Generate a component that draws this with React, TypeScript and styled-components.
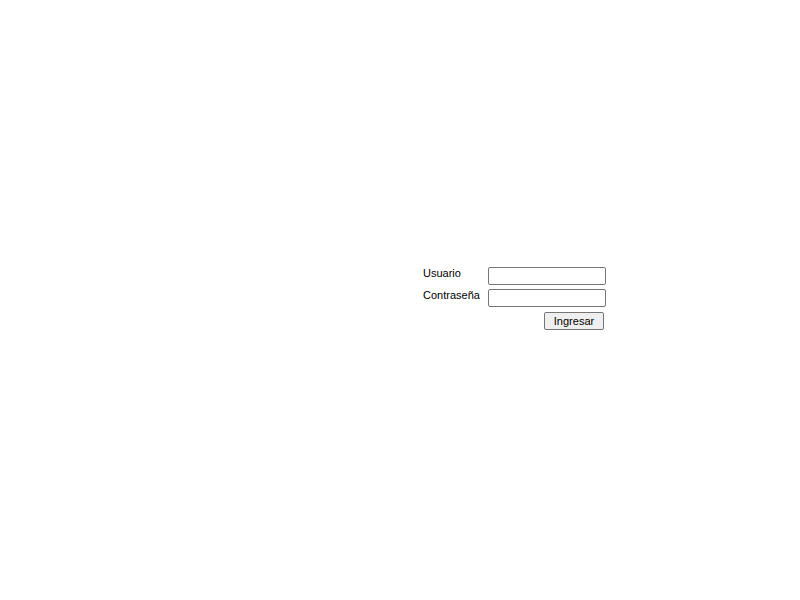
import React, { useState } from 'react';
import styled, { createGlobalStyle } from 'styled-components';

const GlobalStyle = createGlobalStyle`
  body {
    margin: 0;
    background: #fff;
    color: #000;
    font-family: "Liberation Sans", Arial, sans-serif;
    font-size: 11px;
  }
`;

const Page = styled.main`
  box-sizing: border-box;
  display: grid;
  grid-template-columns: 1fr 1fr;
  align-items: center;
  min-height: 100vh;
  padding-bottom: 4px;
`;

const LoginForm = styled.form`
  grid-column: 2;
  display: grid;
  grid-template-columns: 57px 118px;
  column-gap: 8px;
  row-gap: 4px;
  padding-left: 23px;
`;

const Label = styled.label`
  line-height: 13px;
`;

const Field = styled.input`
  box-sizing: border-box;
  width: 100%;
  height: 18px;
  margin: 0;
  padding: 1px 2px;
  border: 1px solid #767676;
  border-radius: 2px;
  background: #fff;
  font: inherit;
`;

const SubmitButton = styled.button`
  grid-column: 2;
  justify-self: end;
  box-sizing: border-box;
  width: 60px;
  height: 18px;
  margin: 1px 2px 0 0;
  padding: 0;
  border: 1px solid #767676;
  border-radius: 2px;
  background: #efefef;
  color: #000;
  font: inherit;
`;

const App = () => {
  const [user, setUser] = useState('');
  const [password, setPassword] = useState('');

  return (
    <>
      <GlobalStyle />
      <Page>
        <LoginForm onSubmit={(e: React.FormEvent) => e.preventDefault()}>
          <Label htmlFor="usuario">Usuario</Label>
          <Field id="usuario" type="text" value={user} onChange={(e) => setUser(e.target.value)} />
          <Label htmlFor="contrasena">Contraseña</Label>
          <Field
            id="contrasena"
            type="password"
            value={password}
            onChange={(e) => setPassword(e.target.value)}
          />
          <SubmitButton type="submit">Ingresar</SubmitButton>
        </LoginForm>
      </Page>
    </>
  );
};

export default App;
